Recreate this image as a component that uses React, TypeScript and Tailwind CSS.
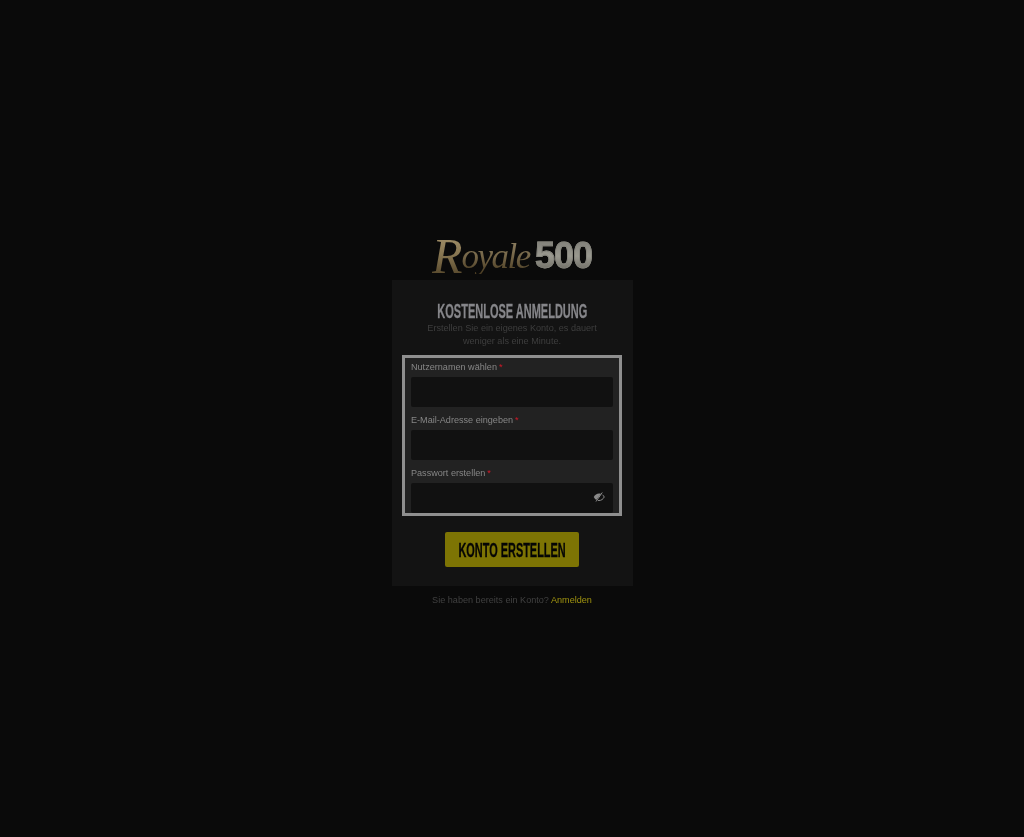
function EyeSlash() {
  return (
    <svg viewBox="0 0 24 24" className="mb-[3px] h-[12px] w-[12px]" fill="none">
      <path d="M1.5 12C4 7.500 7.500 5 12 5c1.500 0 2.800.3 4 .8L6.500 18C4.400 16.800 2.800 14.700 1.500 12z" fill="#8a8a8a" />
      <path d="M19 7.500c1.500 1.200 2.600 2.800 3.500 4.500-2.500 4.500-6 7-10.500 7-.8 0-1.500-.1-2.200-.2" stroke="#8a8a8a" strokeWidth="2" />
      <path d="M18.500 3 6 21" stroke="#8a8a8a" strokeWidth="2" />
    </svg>
  );
}

function Field({ label, first, password }: { label: string; first?: boolean; password?: boolean }) {
  return (
    <div className="flex flex-col">
      <label className={`flex items-end gap-[2px] pb-[3px] text-[9.1px] leading-[14px] text-[#868686] blur-[0.35px] ${first ? 'h-[19px]' : 'h-[23px]'}`}>
        {label} <span className="text-[#d01828]">*</span>
      </label>
      <div className="flex h-[30px] items-center justify-end rounded-[2px] bg-[#111111] pr-[8px]">
        {password && <EyeSlash />}
      </div>
    </div>
  );
}

export default function App() {
  return (
    <div className="flex min-h-[837px] flex-col items-center bg-[#0a0a0a] pt-[236px] font-['Liberation_Sans',sans-serif]">
      <div className="flex h-[44px] w-[160px] items-center pb-[4px] leading-none blur-[0.4px]">
        <span className="bg-gradient-to-b from-[#a8966f] via-[#84734f] to-[#4a3c22] bg-clip-text pr-[2px] font-['Liberation_Serif',serif] text-[50px] text-transparent italic">
          R
        </span>
        <span className="-ml-[3px] bg-gradient-to-b from-[#8d7f63] via-[#756648] to-[#4a3c22] bg-clip-text pr-[2px] font-['Liberation_Serif',serif] text-[35px] tracking-[-1.5px] text-transparent italic">
          oyale
        </span>
        <span className="ml-auto bg-gradient-to-b from-[#7c7b75] via-[#9a9990] to-[#64625a] bg-clip-text text-[36px] font-bold tracking-[-1px] text-transparent [-webkit-text-stroke:0.8px_#85847c]">
          500
        </span>
      </div>

      <div className="ml-px flex h-[306px] w-[241px] flex-col items-center bg-[#131313] pt-[21px]">
        <h1 className="inline-block scale-x-[0.55] text-[20px] leading-[20px] font-bold whitespace-nowrap text-[#86868a] blur-[0.3px] [-webkit-text-stroke:0.3px_#86868a]">
          KOSTENLOSE ANMELDUNG
        </h1>
        <p className="mt-[1px] mr-px w-[190px] text-center text-[9.1px] leading-[13px] text-[#3e3e3e] blur-[0.35px]">
          Erstellen Sie ein eigenes Konto, es dauert weniger als eine Minute.
        </p>

        <div className="mt-[7px] mr-px flex h-[161px] w-[220px] flex-col border-[3px] border-[#8f8f8f] bg-[#222222] px-[6px]">
          <Field label="Nutzernamen wählen" first />
          <Field label="E-Mail-Adresse eingeben" />
          <Field label="Passwort erstellen" password />
        </div>

        <button className="mt-[16px] mr-px flex h-[35px] w-[134px] items-center justify-center rounded-[2px] bg-[#7d7404]">
          <span className="inline-block scale-x-[0.52] text-[21px] leading-none font-bold whitespace-nowrap text-[#050505] blur-[0.2px] [-webkit-text-stroke:0.3px_#050505]">
            KONTO ERSTELLEN
          </span>
        </button>
      </div>

      <p className="mt-[7px] text-[9.1px] leading-[14px] text-[#414141] blur-[0.35px]">
        Sie haben bereits ein Konto? <a className="text-[#a09410]">Anmelden</a>
      </p>
    </div>
  );
}
